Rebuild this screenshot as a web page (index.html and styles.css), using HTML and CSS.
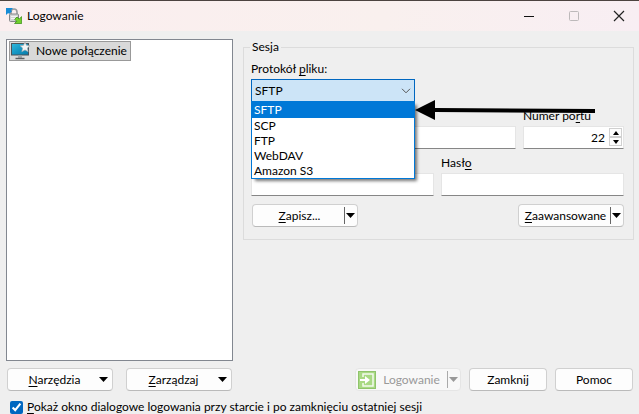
FILE: index.html
```html
<!DOCTYPE html>
<html lang="pl">
<head>
<meta charset="utf-8">
<meta name="viewport" content="width=device-width, initial-scale=1">
<title>Logowanie</title>
<link rel="stylesheet" href="styles.css">
</head>
<body>
<div class="window">
  <header class="titlebar">
    <svg class="app-icon" viewBox="0 0 16 16" aria-hidden="true">
      <path d="M5 7V4a3 3 0 0 1 6 0v3" fill="none" stroke="#97999c" stroke-width="1.600"/>
      <rect x="3.500" y="6" width="9" height="7.500" rx="1" fill="#d2d3d5" stroke="#85878a"/>
      <path d="M5 8.500h6M5 10.500h5" stroke="#f4f4f4"/>
      <path d="M0 0h7L5 2.200l1 1L3.200 6l-1-1L0 7z" fill="#168bd6"/>
      <path d="M15.700 8.500v7H8.500l2.200-2.200-2-2 2.300-2.300 2.200 2z" fill="#72d12e" stroke="#31870e" stroke-width=".7"/>
    </svg>
    <h1 class="title">Logowanie</h1>
    <div class="window-buttons">
      <button class="window-button" aria-label="Minimalizuj"><svg viewBox="0 0 10 10"><path d="M0 5.500h10" stroke="#111"/></svg></button>
      <button class="window-button" aria-label="Maksymalizuj" disabled><svg viewBox="0 0 10 10"><rect x=".5" y=".5" width="9" height="9" rx="1" fill="none" stroke="#bdb9ba"/></svg></button>
      <button class="window-button" aria-label="Zamknij okno"><svg viewBox="0 0 10 10"><path d="M0 0l10 10M10 0L0 10" stroke="#222" stroke-width="1.200"/></svg></button>
    </div>
  </header>

  <main class="content">
    <div class="panes">
      <nav class="sites" aria-label="Połączenia">
        <button class="site">
          <svg class="site-icon" viewBox="0 0 20 18" aria-hidden="true">
            <defs><linearGradient id="screen" x2="1" y2="1"><stop stop-color="#33b9dc"/><stop offset=".5" stop-color="#1597c4"/><stop offset="1" stop-color="#087aa8"/></linearGradient></defs>
            <rect x=".5" y="1.500" width="17" height="11.500" fill="url(#screen)" stroke="#4d5359"/>
            <path d="M7 13.500h4V16H7z" fill="#a4a8ac"/>
            <path d="M4.500 16.500h9" stroke="#5a5e62" stroke-width="1.400"/>
            <path d="M14 0l1.500 3.300 3.500.4-2.600 2.400.8 3.600-3.200-1.800-3.200 1.800.8-3.600L9 3.700l3.500-.4z" fill="#f4f4f4" stroke="#9aa3a8" stroke-width=".6"/>
          </svg>
          <span>Nowe połączenie</span>
        </button>
      </nav>

      <fieldset class="session">
        <legend>Sesja</legend>
        <label class="field-label" for="protocol">Protokół <u>p</u>liku:</label>
        <div class="protocol-box">
          <select class="protocol" id="protocol">
            <option>SFTP</option><option>SCP</option><option>FTP</option><option>WebDAV</option><option>Amazon S3</option>
          </select>
          <svg class="chevron" viewBox="0 0 10 6" aria-hidden="true"><path d="M1 .8l4 4 4-4" fill="none" stroke="#555"/></svg>
          <ul class="protocol-list" role="listbox" aria-label="Protokół">
            <li class="option selected" role="option" aria-selected="true">SFTP</li>
            <li class="option" role="option">SCP</li>
            <li class="option" role="option">FTP</li>
            <li class="option" role="option">WebDAV</li>
            <li class="option" role="option">Amazon S3</li>
          </ul>
          <svg class="arrow" viewBox="0 0 180 20" aria-hidden="true"><path d="M0 10L20 0v8l160 1v4l-160-1v8z"/></svg>
        </div>
        <div class="host-row">
          <input class="text-box" type="text" aria-label="Nazwa hosta">
          <div class="port">
            <label class="field-label" for="port">Numer po<u>r</u>tu</label>
            <div class="spinner">
              <input class="text-box port-input" id="port" type="text" inputmode="numeric" value="22">
              <div class="steps">
                <button class="step" aria-label="Zwiększ"><svg viewBox="0 0 6 4"><path d="M0 4l3-4 3 4z"/></svg></button>
                <button class="step" aria-label="Zmniejsz"><svg viewBox="0 0 6 4"><path d="M0 0l3 4 3-4z"/></svg></button>
              </div>
            </div>
          </div>
        </div>
        <div class="login-row">
          <input class="text-box" type="text" aria-label="Nazwa użytkownika">
          <div class="password">
            <label class="field-label" for="password">Hasł<u>o</u></label>
            <input class="text-box" id="password" type="password">
          </div>
        </div>
        <div class="session-actions">
          <button class="button split"><span class="caption"><u>Z</u>apisz...</span><span class="drop"><svg class="triangle" viewBox="0 0 9 5"><path d="M0 0h9L4.500 5z"/></svg></span></button>
          <button class="button split"><span class="caption"><u>Z</u>aawansowane</span><span class="drop"><svg class="triangle" viewBox="0 0 9 5"><path d="M0 0h9L4.500 5z"/></svg></span></button>
        </div>
      </fieldset>
    </div>

    <footer class="actions">
      <div class="action-group tools">
        <button class="button menu"><span class="caption"><u>N</u>arzędzia</span><svg class="triangle" viewBox="0 0 9 5"><path d="M0 0h9L4.500 5z"/></svg></button>
        <button class="button menu"><span class="caption"><u>Z</u>arządzaj</span><svg class="triangle" viewBox="0 0 9 5"><path d="M0 0h9L4.500 5z"/></svg></button>
      </div>
      <div class="action-group">
        <button class="button split login" disabled>
          <svg class="login-icon" viewBox="0 0 18 18" aria-hidden="true"><rect x=".5" y=".5" width="17" height="17" fill="#a9d984" stroke="#8fc46b"/><path d="M5 6V3h10v12H5v-3" fill="none" stroke="#f3faee" stroke-width="1.500"/><path d="M2 9h6" stroke="#fff" stroke-width="2"/><path d="M7 5l5 4-5 4z" fill="#fff"/></svg>
          <span class="caption">Logowanie</span><span class="drop"><svg class="triangle" viewBox="0 0 9 5"><path d="M0 0h9L4.500 5z"/></svg></span>
        </button>
        <button class="button plain">Zamknij</button>
        <button class="button plain">Pomoc</button>
      </div>
    </footer>
    <label class="startup"><input class="check" type="checkbox" checked><span><u>P</u>okaż okno dialogowe logowania przy starcie i po zamknięciu ostatniej sesji</span></label>
  </main>
</div>
</body>
</html>
```
FILE: styles.css
```css
* {
  box-sizing: border-box;
}

body {
  margin: 0;
  background: #efefef;
  color: #000;
  font: 12px/16px Lato, "Open Sans", sans-serif;
}

button,
input,
select {
  margin: 0;
  font: inherit;
  color: inherit;
}

svg {
  display: block;
  flex: none;
}

u {
  text-underline-offset: 2px;
}

.window {
  min-height: 100vh;
  overflow: hidden;
}

.titlebar {
  display: flex;
  align-items: center;
  height: 31px;
  padding-left: 6px;
  border-top: 1px solid #4c4340;
  background: linear-gradient(90deg, #fbeeef, #f9f0ee 60%, #f8eef3);
}

.app-icon {
  width: 16px;
  height: 16px;
}

.title {
  margin: 0 auto 0 5px;
  font-size: 12px;
  font-weight: 400;
}

.window-buttons {
  display: flex;
}

.window-button {
  display: grid;
  place-items: center;
  width: 45px;
  height: 28px;
  padding: 0;
  border: 0;
  background: none;
}

.window-button:last-child {
  margin-right: -2px;
}

.window-button svg {
  width: 10px;
  height: 10px;
  overflow: visible;
}

.content {
  padding: 8px 5px 0 6px;
}

.panes {
  display: grid;
  grid-template-columns: 227fr 391fr;
  gap: 10px;
}

.sites {
  min-height: 322px;
  padding: 1px 2px;
  border: 1px solid #828790;
  background: #fff;
}

.site {
  display: flex;
  align-items: center;
  gap: 5px;
  height: 20px;
  padding: 0 3px 0 1px;
  border: 1px solid #999;
  background: #d9d9d9;
}

.site-icon {
  width: 20px;
  height: 18px;
}

.session {
  align-self: start;
  min-width: 0;
  margin: 0;
  padding: 6px 9px 12px 7px;
  border: 1px solid #dcdcdc;
}

.session legend {
  margin-left: -1px;
  padding: 0 2px;
}

.field-label {
  display: block;
  height: 18px;
}

.protocol-box {
  position: relative;
  width: 44%;
}

.protocol {
  display: block;
  width: 100%;
  height: 23px;
  padding: 0 3px;
  border: 1px solid #0067c0;
  border-radius: 0;
  background: #cce4f7;
  appearance: none;
}

.chevron {
  position: absolute;
  top: 9px;
  right: 4px;
  width: 10px;
  height: 6px;
}

.protocol-list {
  position: absolute;
  z-index: 1;
  top: 22px;
  left: 0;
  width: 100%;
  margin: 0;
  padding: 0;
  border: 1px solid #0078d7;
  background: #fff;
  box-shadow: 3px 3px 3px -1px #0008;
  list-style: none;
}

.option {
  height: 15px;
  padding-left: 2px;
  line-height: 15px;
}

.option.selected {
  height: 16px;
  line-height: 16px;
  background: #0078d7;
  color: #fff;
}

.arrow {
  position: absolute;
  z-index: 2;
  top: 21px;
  left: 100%;
  width: 180px;
  height: 20px;
}

.host-row,
.login-row {
  display: grid;
  align-items: end;
  gap: 7px;
  margin-top: 6px;
}

.host-row {
  grid-template-columns: 265fr 101fr;
}

.login-row {
  grid-template-columns: 1fr 1fr;
}

.text-box {
  display: block;
  width: 100%;
  height: 23px;
  padding: 0 4px;
  border: 1px solid #e5e5e5;
  border-bottom-color: #868686;
  border-radius: 1px;
  background: #fff;
}

.spinner {
  position: relative;
}

.port-input {
  padding-right: 18px;
  text-align: right;
}

.steps {
  position: absolute;
  top: 2px;
  right: 2px;
}

.step {
  display: grid;
  place-items: center;
  width: 13px;
  height: 9px;
  padding: 0;
  border: 1px solid #d0d0d0;
  background: #fdfdfd;
}

.step svg {
  width: 6px;
  height: 4px;
}

.session-actions {
  display: flex;
  justify-content: space-between;
  margin-top: 8px;
  padding-left: 1px;
}

.button {
  display: flex;
  align-items: center;
  width: 106px;
  height: 23px;
  padding: 0 2px;
  border: 1px solid #d0d0d0;
  border-bottom-color: #bababa;
  border-radius: 4px;
  background: #fdfdfd;
}

.caption {
  flex: 1;
  text-align: center;
  white-space: nowrap;
}

.drop {
  display: flex;
  align-items: center;
  height: 17px;
  padding-left: 1px;
  border-left: 1px solid #666;
}

.triangle {
  width: 9px;
  height: 5px;
  fill: currentColor;
}

.menu {
  padding: 0 4px 0 2px;
}

.login {
  gap: 2px;
}

.login:disabled {
  border-color: #e5e5e5;
  background: #f8f8f8;
  color: #999;
}

.login .drop {
  border-color: #aaa;
}

.login-icon {
  width: 18px;
  height: 18px;
}

.plain {
  justify-content: center;
  width: 78px;
}

.actions {
  display: flex;
  justify-content: space-between;
  padding: 7px 1px 0;
}

.action-group {
  display: flex;
  gap: 8px;
}

.tools {
  gap: 13px;
}

.startup {
  display: flex;
  align-items: center;
  gap: 4px;
  margin-top: 8px;
  padding-left: 4px;
  white-space: nowrap;
}

.check {
  width: 13px;
  height: 13px;
  accent-color: #0067c0;
}
```
